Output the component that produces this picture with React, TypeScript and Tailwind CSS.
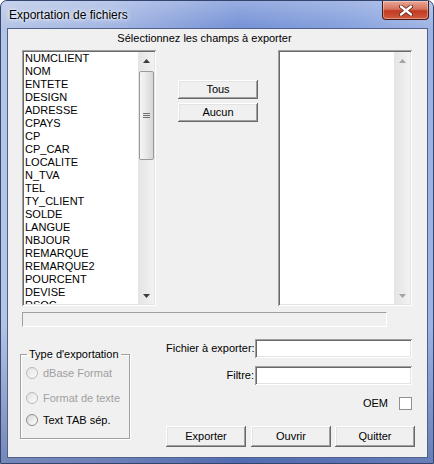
import React from "react";

const FIELDS = [
  "NUMCLIENT",
  "NOM",
  "ENTETE",
  "DESIGN",
  "ADRESSE",
  "CPAYS",
  "CP",
  "CP_CAR",
  "LOCALITE",
  "N_TVA",
  "TEL",
  "TY_CLIENT",
  "SOLDE",
  "LANGUE",
  "NBJOUR",
  "REMARQUE",
  "REMARQUE2",
  "POURCENT",
  "DEVISE",
  "RSOC",
];

// classic 3d bevels
const raised =
  "shadow-[inset_-1px_-1px_0_#696969,inset_1px_1px_0_#ffffff,inset_-2px_-2px_0_#a0a0a0,inset_2px_2px_0_#e3e3e3]";
const sunken =
  "shadow-[inset_1px_1px_0_#a0a0a0,inset_-1px_-1px_0_#ffffff,inset_2px_2px_0_#696969,inset_-2px_-2px_0_#e3e3e3]";

function Arrow({ down, disabled }: { down?: boolean; disabled?: boolean }) {
  return (
    <svg width="7" height="4" viewBox="0 0 7 4" className="block">
      <path
        d={down ? "M0 0 H7 L3.5 4 Z" : "M0 4 H7 L3.5 0 Z"}
        fill={disabled ? "#a3a3a3" : "#3c3c3c"}
      />
    </svg>
  );
}

function ScrollBar({ thumb }: { thumb?: boolean }) {
  return (
    <div className="flex h-full w-[16px] shrink-0 flex-col items-center bg-[linear-gradient(90deg,#e4e4e4,#f2f2f2)]">
      <div className="flex h-[17px] w-full items-center justify-center">
        <Arrow disabled={!thumb} />
      </div>
      {thumb ? (
        <div className="mt-[2px] flex h-[89px] w-[15px] items-center justify-center rounded-[2px] border border-[#9a9a9a] bg-[linear-gradient(90deg,#f6f6f6,#e4e4e4_60%,#d6d6d6)]">
          <div className="flex flex-col gap-[1px]">
            <div className="h-px w-[7px] bg-[#6f6f6f]" />
            <div className="h-px w-[7px] bg-[#6f6f6f]" />
            <div className="h-px w-[7px] bg-[#6f6f6f]" />
          </div>
        </div>
      ) : null}
      <div className="flex-1" />
      <div className="flex h-[17px] w-full items-center justify-center">
        <Arrow down disabled={!thumb} />
      </div>
    </div>
  );
}

function ListBox({ items, thumb }: { items: string[]; thumb?: boolean }) {
  return (
    <div className={`flex h-[256px] w-[134px] shrink-0 bg-white p-[2px] ${sunken}`}>
      <div className="flex-1 overflow-hidden pl-[1px]">
        {items.map((item) => (
          <div key={item} className="h-[13px] whitespace-nowrap leading-[13px]">
            {item}
          </div>
        ))}
      </div>
      <ScrollBar thumb={thumb} />
    </div>
  );
}

function WinButton({ label, tall }: { label: string; tall?: boolean }) {
  return (
    <button
      type="button"
      className={`flex w-[80px] items-center justify-center bg-[#f0f0f0] text-[11px] text-black ${raised} ${
        tall ? "h-[21px]" : "h-[19px]"
      }`}
    >
      {label}
    </button>
  );
}

function Radio({ label, disabled }: { label: string; disabled?: boolean }) {
  return (
    <div className="flex h-[16px] items-center">
      <div
        className={`h-[12px] w-[12px] rounded-full border ${
          disabled
            ? "border-[#b9b9b9] bg-[linear-gradient(135deg,#e2e2e2,#fbfbfb)]"
            : "border-[#8a8b8b] bg-[linear-gradient(135deg,#d6d6d6,#ffffff)]"
        }`}
      />
      <span className={`ml-[5px] whitespace-nowrap ${disabled ? "text-[#a0a0a0]" : "text-black"}`}>
        {label}
      </span>
    </div>
  );
}

export default function App() {
  return (
    <div className="h-[464px] w-[434px] overflow-hidden bg-white font-['Liberation_Sans',Arial,sans-serif]">
      <div className="relative flex h-[464px] w-[434px] flex-col rounded-t-[7px] border border-[#33456d] bg-[linear-gradient(90deg,#b4c4e6_0%,#a3b6e2_25%,#7591d6_55%,#85a0dd_80%,#9fb4e4_100%)]">
        <div className="pointer-events-none absolute inset-0 rounded-t-[6px] bg-[linear-gradient(180deg,rgba(255,255,255,0.25)_0%,rgba(255,255,255,0)_6%,rgba(40,60,130,0)_70%,rgba(40,60,130,0.45)_100%)]" />

        {/* title bar */}
        <div className="relative flex h-[27px] items-center pl-[8px] pt-[1px] text-[12px] text-black [text-shadow:0_0_6px_#ffffff,0_0_3px_#ffffff]">
          Exportation de fichiers
        </div>
        <div className="absolute right-[4px] top-0 flex h-[19px] w-[47px] items-center justify-center rounded-b-[4px] border border-t-0 border-[#4a1a12] bg-[linear-gradient(180deg,#e9a796_0%,#d6735e_45%,#c23a20_55%,#cf5b3f_100%)] shadow-[inset_0_0_0_1px_rgba(255,255,255,0.35)]">
          <svg width="14" height="11" viewBox="0 0 14 11">
            <path d="M2 1.5 L12 9.5 M12 1.5 L2 9.5" stroke="#5a2015" strokeWidth="4" strokeLinecap="round" />
            <path d="M2 1.5 L12 9.5 M12 1.5 L2 9.5" stroke="#ffffff" strokeWidth="2.4" strokeLinecap="round" />
          </svg>
        </div>

        {/* client area */}
        <div className="relative ml-[6px] h-[430px] w-[421px] border border-[#51628a] bg-[#f0f0f0] text-[11px] leading-[13px] text-black">
          <div className="mt-[3px] h-[13px] w-[393px] text-center">Sélectionnez les champs à exporter</div>

          <div className="mt-[5px] flex pl-[14px]">
            <ListBox items={FIELDS} thumb />
            <div className="ml-[22px] flex flex-col pt-[30px]">
              <WinButton label="Tous" />
              <div className="mt-[4px]">
                <WinButton label="Aucun" />
              </div>
            </div>
            <div className="ml-[20px]">
              <ListBox items={[]} />
            </div>
          </div>

          <div className="ml-[14px] mt-[6px] h-[15px] w-[365px] border border-b-white border-l-[#a0a0a0] border-r-white border-t-[#a0a0a0]" />

          <div className="flex">
            <fieldset className="ml-[12px] mt-[21px] h-[91px] w-[110px] border border-[#a0a0a0] pl-[5px] shadow-[inset_1px_1px_0_#ffffff,1px_1px_0_#ffffff]">
              <legend className="ml-[1px] px-[2px] leading-[13px]">Type d'exportation</legend>
              <div className="mt-[4px]">
                <Radio label="dBase Format" disabled />
              </div>
              <div className="mt-[9px]">
                <Radio label="Format de texte" disabled />
              </div>
              <div className="mt-[6px]">
                <Radio label="Text TAB sép." />
              </div>
            </fieldset>

            <div className="ml-[36px] mt-[12px] flex w-[249px] flex-col">
              <div className="flex h-[19px] items-center">
                <div className="w-[88px] whitespace-nowrap text-right">Fichier à exporter:</div>
                <div className={`ml-[1px] h-[19px] w-[157px] bg-white ${sunken}`} />
              </div>
              <div className="mt-[8px] flex h-[19px] items-center">
                <div className="w-[88px] whitespace-nowrap text-right">Filtre:</div>
                <div className={`ml-[1px] h-[19px] w-[157px] bg-white ${sunken}`} />
              </div>
              <div className="mt-[12px] flex h-[13px] w-[246px] items-center justify-end">
                <span>OEM</span>
                <div className="ml-[11px] h-[13px] w-[13px] border border-[#8f8f8f] bg-white" />
              </div>
              <div className="mt-[16px] flex">
                <WinButton label="Exporter" tall />
                <div className="ml-[5px]">
                  <WinButton label="Ouvrir" tall />
                </div>
                <div className="ml-[4px]">
                  <WinButton label="Quitter" tall />
                </div>
              </div>
            </div>
          </div>
        </div>
      </div>
    </div>
  );
}
